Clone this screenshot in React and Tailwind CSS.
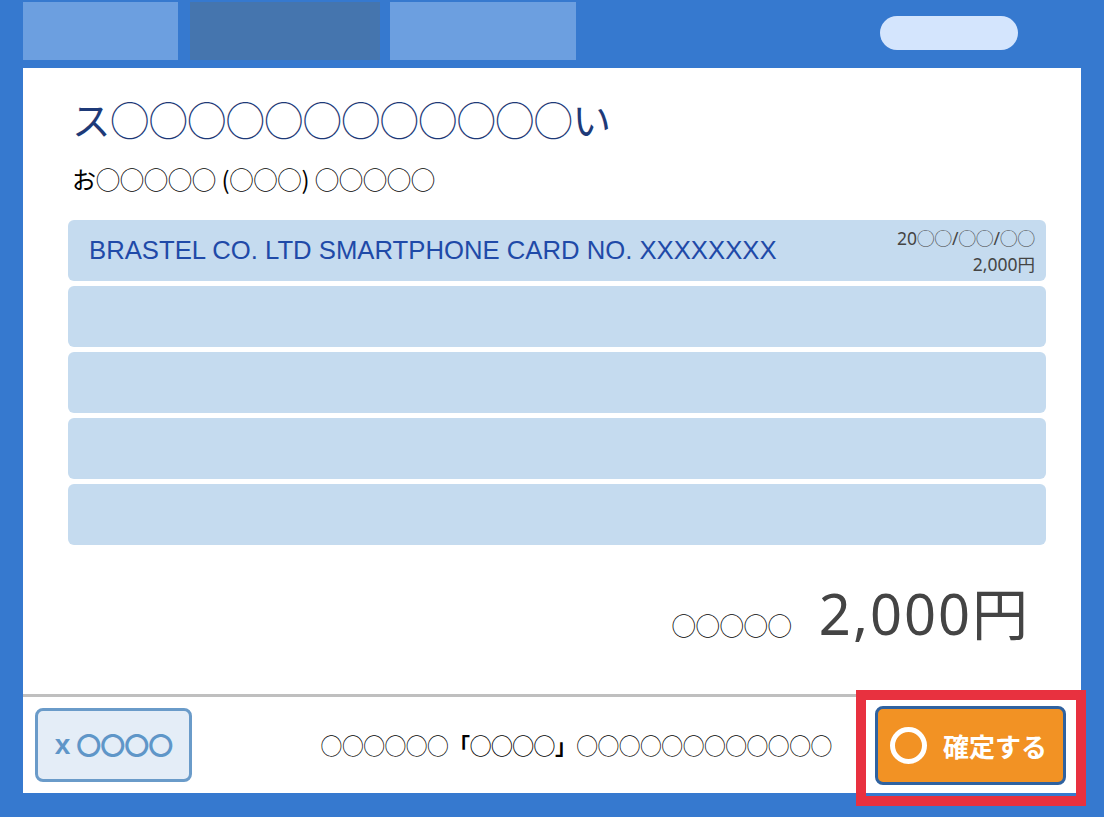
import React from 'react';

const jp = { fontFamily: '"Noto Sans CJK JP", "Noto Sans", sans-serif' };
const arial = { fontFamily: '"Liberation Sans", "Noto Sans CJK JP", sans-serif' };
const latin = { fontFamily: '"Noto Sans", "Noto Sans CJK JP", sans-serif' };

const rows = [
  { label: 'BRASTEL CO. LTD SMARTPHONE CARD NO. XXXXXXXX', date: '20◯◯/◯◯/◯◯', price: '2,000円' },
  {},
  {},
  {},
  {},
];

const App = () => {
  return (
    <div className="relative w-[1104px] h-[817px] bg-[#3679cf] overflow-hidden" style={jp}>
      {/* top tabs */}
      <div className="flex h-[68px] pl-[23px]">
        <div className="mt-[2px] w-[155px] h-[58px] bg-[#6c9fe0]" />
        <div className="mt-[2px] ml-[12px] w-[190px] h-[58px] bg-[#4575ae]" />
        <div className="mt-[2px] ml-[10px] w-[186px] h-[58px] bg-[#6c9fe0]" />
        <div className="ml-auto mr-[86px] mt-[16px] w-[138px] h-[34px] rounded-full bg-[#d4e5fd]" />
      </div>

      <div className="mx-[23px] h-[725px] bg-white flex flex-col">
        <div className="flex-1 flex flex-col">
          <h1 className="pl-[49px] pt-[26px] text-[38.5px] leading-[48px] text-[#1e3a78]">
            ス◯◯◯◯◯◯◯◯◯◯◯◯い
          </h1>
          <p className="pl-[49px] mt-[22px] text-[24px] leading-[30px] text-black">
            お◯◯◯◯◯ (◯◯◯) ◯◯◯◯◯
          </p>

          <div className="ml-[45px] mr-[35px] mt-[26px] flex flex-col gap-[5px]">
            {rows.map((row, i) => (
              <div key={i} className="h-[61px] rounded-[6px] bg-[#c5dbef] flex items-center pl-[21px] pr-[11px]">
                {row.label && (
                  <>
                    <span className="text-[25.7px] text-[#1f4aa8]" style={arial}>{row.label}</span>
                    <div className="ml-auto flex flex-col items-end text-[17.5px] leading-[26px] text-[#444]" style={latin}>
                      <span>{row.date}</span>
                      <span>{row.price}</span>
                    </div>
                  </>
                )}
              </div>
            ))}
          </div>

          <div className="mt-[36px] flex items-baseline justify-end pr-[51px] text-[#444]">
            <span className="text-[24px] text-black mr-[27px]">◯◯◯◯◯</span>
            <span className="text-[56px] leading-[64px] tracking-[2px]" style={latin}>2,000円</span>
          </div>
        </div>

        {/* footer */}
        <div className="h-[99px] border-t-[3px] border-[#bfbfbf] flex items-center">
          <button className="ml-[12px] w-[157px] h-[74px] rounded-[8px] border-[3px] border-[#6a9bc9] bg-[#e4edf7] flex items-center justify-center gap-[6px] text-[#5f96c8] font-bold">
            <span className="text-[28px]" style={arial}>x</span>
            <span className="text-[25px] tracking-[-1px]">〇〇〇〇</span>
          </button>
          <p className="ml-auto mr-[43px] text-[21.3px] text-black whitespace-nowrap">
            ◯◯◯◯◯◯<span className="font-bold">「◯◯◯◯」</span>◯◯◯◯◯◯◯◯◯◯◯◯
          </p>
          <button className="mr-[15px] w-[191px] h-[79px] rounded-[8px] border-[3px] border-[#2f62a0] bg-[#f29224] flex items-center gap-[16px] pl-[12px] text-white font-bold text-[26px]">
            <span className="w-[37px] h-[37px] rounded-full border-[5px] border-white" />
            <span>確定する</span>
          </button>
        </div>
      </div>

      {/* highlight frame */}
      <div className="absolute left-[856px] top-[690px] w-[230px] h-[116px] border-[10px] border-[#e8313f] pointer-events-none" />
    </div>
  );
};

export default App;
